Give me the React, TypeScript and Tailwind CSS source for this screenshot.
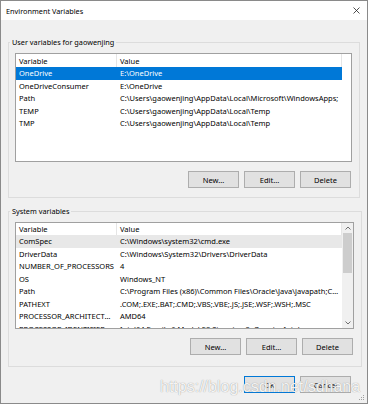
import React from "react";

type Row = { name: string; value: string };

const USER_VARS: Row[] = [
    { name: "OneDrive", value: "E:\\OneDrive" },
    { name: "OneDriveConsumer", value: "E:\\OneDrive" },
    { name: "Path", value: "C:\\Users\\gaowenjing\\AppData\\Local\\Microsoft\\WindowsApps;" },
    { name: "TEMP", value: "C:\\Users\\gaowenjing\\AppData\\Local\\Temp" },
    { name: "TMP", value: "C:\\Users\\gaowenjing\\AppData\\Local\\Temp" },
];

const SYSTEM_VARS: Row[] = [
    { name: "ComSpec", value: "C:\\Windows\\system32\\cmd.exe" },
    { name: "DriverData", value: "C:\\Windows\\System32\\Drivers\\DriverData" },
    { name: "NUMBER_OF_PROCESSORS", value: "4" },
    { name: "OS", value: "Windows_NT" },
    { name: "Path", value: "C:\\Program Files (x86)\\Common Files\\Oracle\\Java\\javapath;C:\\Windows\\system32" },
    { name: "PATHEXT", value: ".COM;.EXE;.BAT;.CMD;.VBS;.VBE;.JS;.JSE;.WSF;.WSH;.MSC" },
    { name: "PROCESSOR_ARCHITECTURE", value: "AMD64" },
    { name: "PROCESSOR_IDENTIFIER", value: "Intel64 Family 6 Model 58 Stepping 9, GenuineIntel" },
];

function Chevron({ up }: { up?: boolean }) {
    return (
        <svg width="6" height="4" viewBox="0 0 6 4">
            <path d={up ? "M0.5 3.5 L3 1 L5.5 3.5" : "M0.5 0.5 L3 3 L5.5 0.5"} fill="none" stroke="#606060" strokeWidth="0.9" />
        </svg>
    );
}

function ListView({ rows, height, focused, scroll }: { rows: Row[]; height: string; focused?: boolean; scroll?: boolean }) {
    return (
        <div className={`flex border border-[#a0a0a0] bg-white ${height}`}>
            <div className="flex-1 flex flex-col overflow-hidden">
                <div className={`flex shrink-0 items-center ${scroll ? "h-[12px]" : "h-[13px]"}`}>
                    <div className="w-[101px] h-full pl-[3px] flex items-center border-r border-[#e5e5e5]">Variable</div>
                    <div className="w-[225px] h-full pl-[3px] flex items-center border-r border-[#e5e5e5]">Value</div>
                </div>
                {rows.map((r, i) => (
                    <div
                        key={r.name}
                        className={
                            i === 0
                                ? focused
                                    ? "flex h-[12.5px] shrink-0 items-center w-[326px] bg-[#0078d7] text-white"
                                    : "flex h-[12.5px] shrink-0 items-center w-[326px] bg-[#e8e8e8]"
                                : "flex h-[12.5px] shrink-0 items-center w-[326px]"
                        }
                    >
                        <div className="w-[101px] pl-[3px] pr-[2px] truncate">{r.name}</div>
                        <div className="w-[225px] pl-[3px] pr-[2px] truncate">{r.value}</div>
                    </div>
                ))}
            </div>
            {scroll && (
                <div className="w-[11px] bg-[#f0f0f0] flex flex-col items-center">
                    <div className="h-[10px] flex items-center justify-center">
                        <Chevron up />
                    </div>
                    <div className="w-[9px] h-[40px] bg-[#cdcdcd]" />
                    <div className="flex-1" />
                    <div className="h-[10px] flex items-center justify-center">
                        <Chevron />
                    </div>
                </div>
            )}
        </div>
    );
}

function Button({ label, primary }: { label: string; primary?: boolean }) {
    return (
        <button
            className={
                primary
                    ? "w-[51px] h-[17px] bg-[#e1e1e1] border border-[#0078d7] flex items-center justify-center"
                    : "w-[51px] h-[17px] bg-[#e1e1e1] border border-[#adadad] flex items-center justify-center"
            }
        >
            {label}
        </button>
    );
}

function ButtonRow() {
    return (
        <div className="flex justify-end gap-[5px] pr-[1px]">
            <Button label="New..." />
            <Button label="Edit..." />
            <Button label="Delete" />
        </div>
    );
}

export default function App() {
    return (
        <div className="w-[368px] h-[405px] bg-white relative font-['Noto_Sans',sans-serif] text-[7.5px] leading-[10px] text-black">
            <div className="w-[368px] h-[404px] border border-[#8a8a8a] flex flex-col">
                {/* title bar */}
                <div className="h-[19px] shrink-0 bg-white flex items-center justify-between pl-[5px] pr-[7px] text-[7.3px]">
                    <span>Environment Variables</span>
                    <svg width="7" height="7" viewBox="0 0 7 7">
                        <path d="M0.5 0.5 L6.5 6.5 M6.5 0.5 L0.5 6.5" stroke="#222" strokeWidth="0.8" />
                    </svg>
                </div>

                <div className="flex-1 bg-[#f0f0f0] flex flex-col px-[7px]">
                    <fieldset className="mt-[17px] border border-[#dcdcdc] pl-[6px] pr-[7px] pt-[6px] pb-[9px]">
                        <legend className="-ml-[5px] px-[2px] text-[7.3px]">User variables for gaowenjing</legend>
                        <ListView rows={USER_VARS} height="h-[109px]" focused />
                        <div className="mt-[9px]">
                            <ButtonRow />
                        </div>
                    </fieldset>

                    <fieldset className="mt-[8px] border border-[#dcdcdc] pl-[6px] pr-[7px] pt-[6px] pb-[11px]">
                        <legend className="-ml-[5px] px-[2px] text-[7.3px]">System variables</legend>
                        <ListView rows={SYSTEM_VARS} height="h-[107px]" scroll />
                        <div className="mt-[9px]">
                            <ButtonRow />
                        </div>
                    </fieldset>

                    <div className="mt-[9px] flex justify-end gap-[5px] pr-[9px]">
                        <Button label="OK" primary />
                        <Button label="Cancel" />
                    </div>
                </div>
            </div>

            {/* resize grip */}
            <svg className="absolute right-[3px] bottom-[4px]" width="6" height="6" viewBox="0 0 6 6">
                <rect x="4" y="0" width="1" height="1" fill="#a0a0a0" />
                <rect x="2" y="2" width="1" height="1" fill="#a0a0a0" />
                <rect x="4" y="2" width="1" height="1" fill="#a0a0a0" />
                <rect x="0" y="4" width="1" height="1" fill="#a0a0a0" />
                <rect x="2" y="4" width="1" height="1" fill="#a0a0a0" />
                <rect x="4" y="4" width="1" height="1" fill="#a0a0a0" />
            </svg>

            {/* watermark */}
            <div className="absolute left-[160px] top-[377px] font-['Liberation_Sans',Arial,sans-serif] text-[16px] leading-[20px] text-white/90 [text-shadow:0_0_1px_#808080]">
                https://blog.csdn.net/sdhana
            </div>
        </div>
    );
}
